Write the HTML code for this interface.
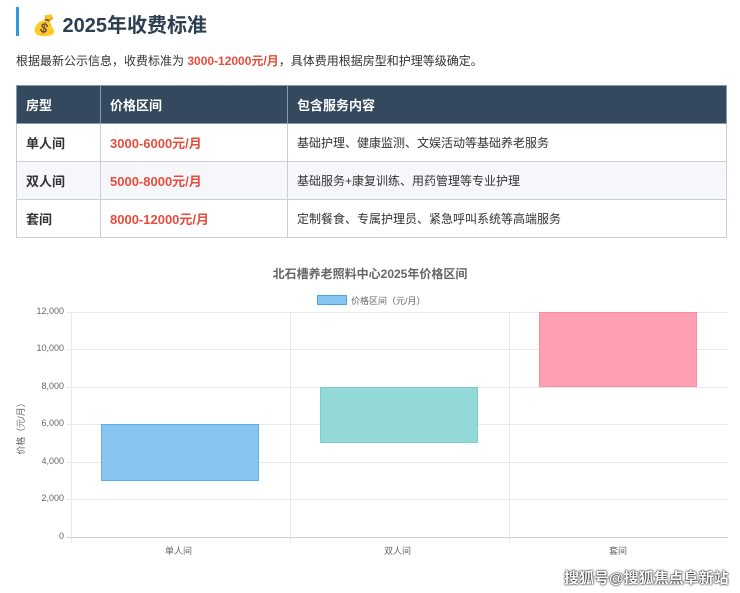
<!DOCTYPE html>
<html><head><meta charset="utf-8"><style>
*{margin:0;padding:0;box-sizing:border-box}
body{width:740px;height:593px;background:#fff;font-family:"Liberation Sans","Noto Sans CJK SC",sans-serif;position:relative;overflow:hidden;color:#333}
.a{position:absolute}
table{border-collapse:collapse;position:absolute;left:16px;top:85px;width:711px;font-size:12px}
td,th{border:1px solid #ccd;text-align:left;padding-left:9px}
th{background:#34495e;color:#fff;height:38px;font-weight:bold;font-size:13px;border-color:#8899aa}
td{height:38px}
tr:nth-child(odd) td{background:#f5f7fa}
.r{color:#e74c3c;font-weight:bold;font-size:13px}
.b{font-weight:bold;font-size:13px}
.yl{font-size:9px;color:#666;text-align:right;width:40px;left:24px}
.g{background:#e8e8e8}
</style></head><body>
<div class="a" style="left:16px;top:7px;width:3px;height:29px;background:#3498db"></div>
<div class="a" style="left:32px;top:9px;font-size:20px;font-weight:bold;color:#2c3e50">💰 2025年收费标准</div>
<div class="a" style="left:16px;top:52px;font-size:12px">根据最新公示信息，收费标准为 <span style="color:#e74c3c;font-weight:bold">3000-12000元/月</span>，具体费用根据房型和护理等级确定。</div>
<table>
<tr><th style="width:84px">房型</th><th style="width:187px">价格区间</th><th>包含服务内容</th></tr>
<tr><td class="b">单人间</td><td class="r">3000-6000元/月</td><td>基础护理、健康监测、文娱活动等基础养老服务</td></tr>
<tr><td class="b">双人间</td><td class="r">5000-8000元/月</td><td>基础服务+康复训练、用药管理等专业护理</td></tr>
<tr><td class="b">套间</td><td class="r">8000-12000元/月</td><td>定制餐食、专属护理员、紧急呼叫系统等高端服务</td></tr>
</table>
<div class="a" style="left:0;width:740px;top:265px;text-align:center;font-size:12px;font-weight:bold;color:#666">北石槽养老照料中心2025年价格区间</div>
<div class="a" style="left:317px;top:295px;width:30px;height:10px;background:#87c5f0;border:1px solid #4aa3e0"></div>
<div class="a" style="left:351px;top:294px;font-size:9px;color:#666">价格区间（元/月）</div>
<!-- grid -->
<div class="a g" style="left:67px;top:312px;width:661px;height:1px"></div>
<div class="a g" style="left:67px;top:349px;width:661px;height:1px"></div>
<div class="a g" style="left:67px;top:387px;width:661px;height:1px"></div>
<div class="a g" style="left:67px;top:424px;width:661px;height:1px"></div>
<div class="a g" style="left:67px;top:462px;width:661px;height:1px"></div>
<div class="a g" style="left:67px;top:499px;width:661px;height:1px"></div>
<div class="a" style="left:67px;top:537px;width:661px;height:1px;background:#ccc"></div>
<div class="a g" style="left:71px;top:312px;width:1px;height:231px"></div>
<div class="a g" style="left:290px;top:312px;width:1px;height:231px"></div>
<div class="a g" style="left:509px;top:312px;width:1px;height:231px"></div>
<div class="a yl" style="top:306px">12,000</div>
<div class="a yl" style="top:343px">10,000</div>
<div class="a yl" style="top:381px">8,000</div>
<div class="a yl" style="top:418px">6,000</div>
<div class="a yl" style="top:456px">4,000</div>
<div class="a yl" style="top:493px">2,000</div>
<div class="a yl" style="top:531px">0</div>
<div class="a" style="left:-8px;top:420px;font-size:9px;color:#666;transform:rotate(-90deg)">价格（元/月）</div>
<div class="a" style="left:101px;top:424px;width:158px;height:57px;background:#87c5f0;border:1px solid #5ab0ea"></div>
<div class="a" style="left:320px;top:387px;width:158px;height:56px;background:#93d9d8;border:1px solid #7acfcd"></div>
<div class="a" style="left:539px;top:312px;width:158px;height:75px;background:#fea0b2;border:1px solid #fc8ca3"></div>
<div class="a" style="left:165px;top:544px;font-size:9px;color:#666">单人间</div>
<div class="a" style="left:384px;top:544px;font-size:9px;color:#666">双人间</div>
<div class="a" style="left:609px;top:544px;font-size:9px;color:#666">套间</div>
<div class="a" style="left:564px;top:567px;font-size:15px;font-weight:bold;color:#fff;text-shadow:0 0 2px #000,0 0 1px #000">搜狐号@搜狐焦点阜新站</div>
</body></html>
